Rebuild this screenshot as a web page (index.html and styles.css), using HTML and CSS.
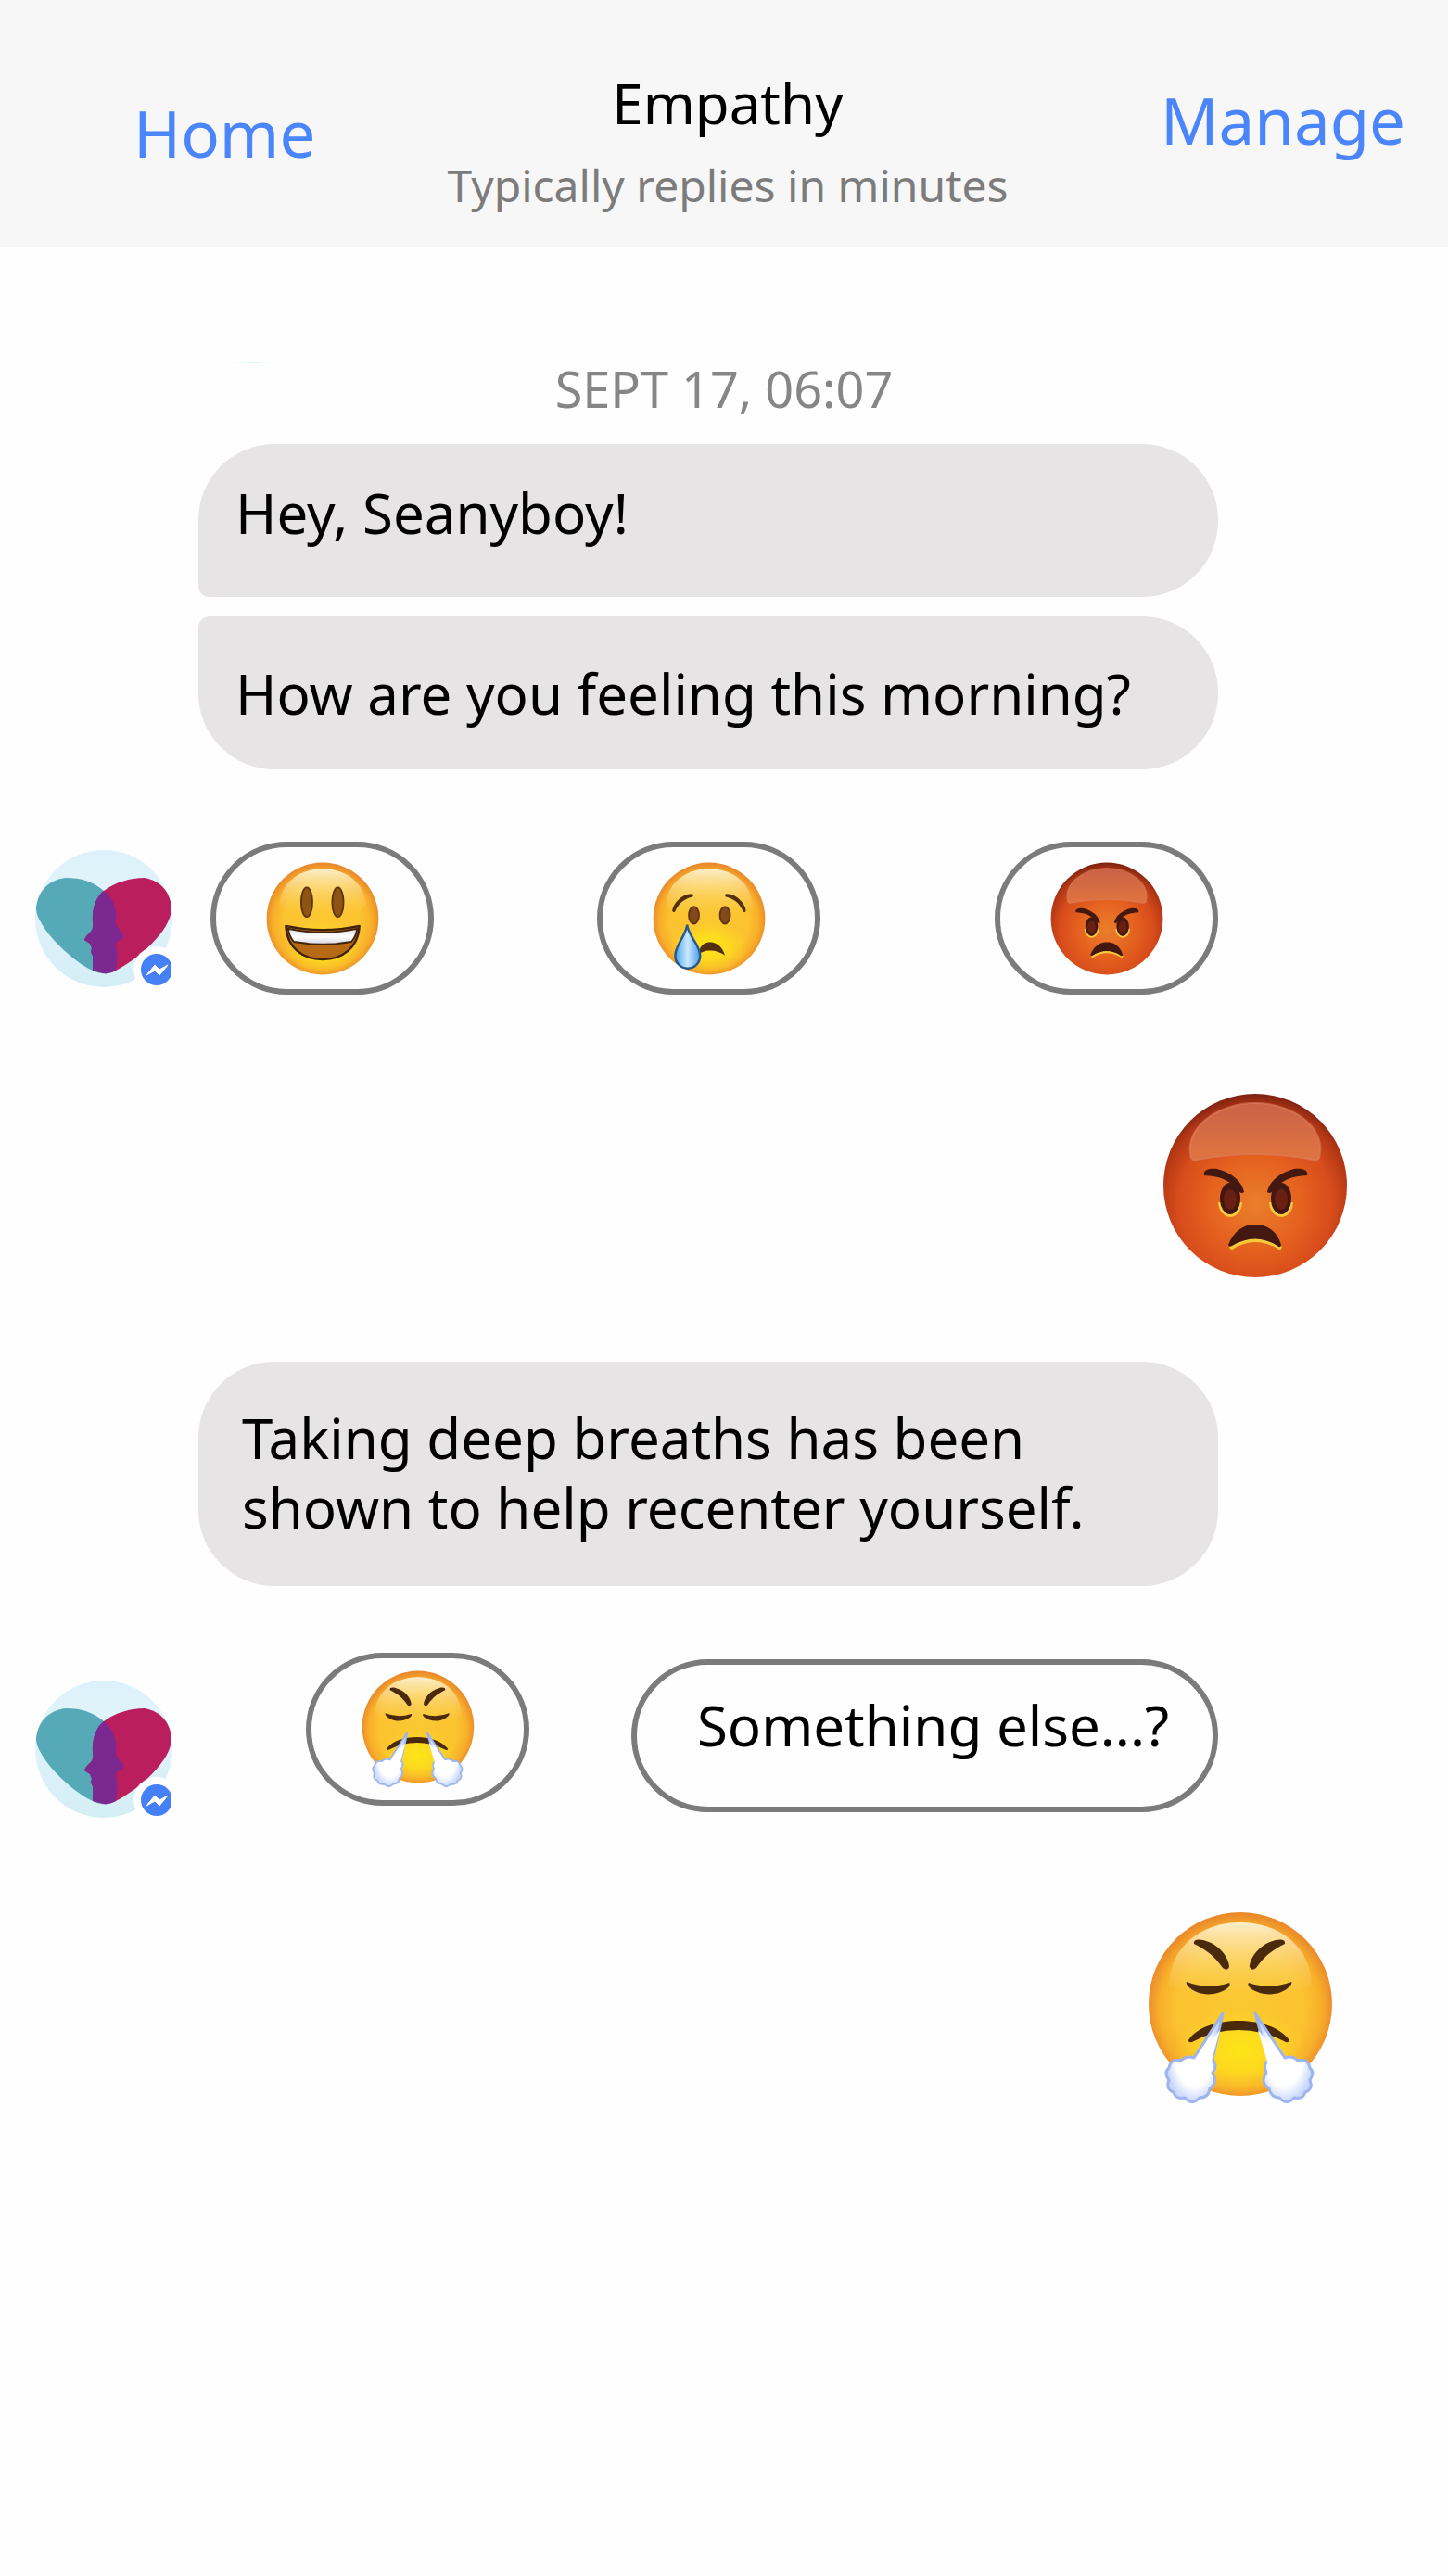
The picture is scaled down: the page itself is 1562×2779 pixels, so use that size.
FILE: index.html
```
<!DOCTYPE html>
<html lang="en">
<head>
<meta charset="utf-8">
<meta name="viewport" content="width=device-width, initial-scale=1">
<title>Empathy</title>
<link rel="stylesheet" href="styles.css">
</head>
<body>

<!-- Shared artwork -->
<svg class="sprite" aria-hidden="true">
  <defs>
    <radialGradient id="yellow" cx="50%" cy="52%" r="51%">
      <stop offset="0" stop-color="#fbc832"/>
      <stop offset="0.68" stop-color="#fbc32f"/>
      <stop offset="0.86" stop-color="#f8b02a"/>
      <stop offset="1" stop-color="#ea8a2a"/>
    </radialGradient>
    <radialGradient id="glow" cx="50%" cy="50%" r="50%">
      <stop offset="0" stop-color="#fde616" stop-opacity="0.95"/>
      <stop offset="0.5" stop-color="#fde218" stop-opacity="0.7"/>
      <stop offset="1" stop-color="#fdd520" stop-opacity="0"/>
    </radialGradient>
    <linearGradient id="sheen" x1="0" y1="0" x2="0" y2="1">
      <stop offset="0" stop-color="#fdf3d4" stop-opacity="0.95"/>
      <stop offset="1" stop-color="#fbd465" stop-opacity="0"/>
    </linearGradient>
    <radialGradient id="red" cx="50%" cy="60%" r="62%">
      <stop offset="0" stop-color="#ea7f2b"/>
      <stop offset="0.4" stop-color="#e5621f"/>
      <stop offset="0.68" stop-color="#d84c1b"/>
      <stop offset="0.86" stop-color="#b03615"/>
      <stop offset="1" stop-color="#6b1a0e"/>
    </radialGradient>
    <linearGradient id="redSheen" x1="0" y1="0" x2="0" y2="1">
      <stop offset="0" stop-color="#cb6247"/>
      <stop offset="1" stop-color="#e0743f"/>
    </linearGradient>
    <linearGradient id="teeth" x1="0" y1="0" x2="0" y2="1">
      <stop offset="0" stop-color="#dcdce2"/>
      <stop offset="0.5" stop-color="#ffffff"/>
      <stop offset="1" stop-color="#d6d6dc"/>
    </linearGradient>
    <linearGradient id="drop" x1="0" y1="0" x2="1" y2="0">
      <stop offset="0" stop-color="#4ba3ee"/>
      <stop offset="0.5" stop-color="#cbe8fd"/>
      <stop offset="1" stop-color="#4a9dec"/>
    </linearGradient>
    <radialGradient id="puff">
      <stop offset="0.65" stop-color="#ffffff"/>
      <stop offset="1" stop-color="#c9d8fb"/>
    </radialGradient>
    <linearGradient id="sky" x1="0" y1="0" x2="0" y2="1">
      <stop offset="0" stop-color="#dcf1fa"/>
      <stop offset="0.3" stop-color="#e2f4fb"/>
      <stop offset="1" stop-color="#d4eef6"/>
    </linearGradient>
    <radialGradient id="trace">
      <stop offset="0" stop-color="#c4ecf5"/>
      <stop offset="1" stop-color="#fefefe" stop-opacity="0"/>
    </radialGradient>
    <clipPath id="badgeClip"><rect width="147" height="148"/></clipPath>
  </defs>

  <symbol id="face" viewBox="0 0 200 200">
    <circle cx="100" cy="100" r="99" fill="url(#yellow)"/>
    <ellipse cx="100" cy="150" rx="70" ry="46" fill="url(#glow)"/>
    <path d="M23 80C24 38 58 12 100 12s76 26 77 68c-44 18-110 18-154 0z" fill="url(#sheen)"/>
  </symbol>

  <symbol id="grin" viewBox="0 0 200 200">
    <use href="#face" width="200" height="200"/>
    <g fill="#8f5314" stroke="#5d330d" stroke-width="3">
      <ellipse cx="72" cy="71" rx="10" ry="26"/>
      <ellipse cx="127" cy="71" rx="10" ry="26"/>
    </g>
    <path d="M35 113Q100 127 165 113C163 151 136 172 100 172S37 151 35 113z" fill="#b76a13" stroke="#40220d" stroke-width="4" stroke-linejoin="round"/>
    <path d="M39 118Q100 131 161 118Q159 132 151 141Q100 150 49 141Q41 132 39 118z" fill="url(#teeth)" stroke="#40220d" stroke-width="3"/>
  </symbol>

  <symbol id="cry" viewBox="0 0 200 200">
    <use href="#face" width="200" height="200"/>
    <g fill="#52300f">
      <path d="M36 88C31 84 46 56 69 56C74 57 72 61 69 62C53 66 46 75 40 87Q38 90 36 88z"/>
      <path d="M164 88C169 84 154 56 131 56C126 57 128 61 131 62C147 66 154 75 160 87Q162 90 164 88z"/>
      <path d="M82 160C84 147 91 142 101 142C115 142 124 152 128 165C116 156 98 153 84 161z"/>
    </g>
    <g fill="#83491a" stroke="#5f3515" stroke-width="3">
      <ellipse cx="73" cy="94" rx="9" ry="15"/>
      <ellipse cx="128" cy="94" rx="9" ry="15"/>
    </g>
    <path d="M61 111C63 131 84 146 84 166A22 22 0 0 1 40 166C40 146 59 131 61 111z" fill="url(#drop)" stroke="#24588f" stroke-width="4"/>
  </symbol>

  <symbol id="angry" viewBox="0 0 200 200">
    <circle cx="100" cy="100" r="99" fill="url(#red)"/>
    <path d="M31 70C22 36 62 11 100 11s78 25 69 59q-2 4-7 2Q100 60 38 72q-5 2-7-2z" fill="url(#redSheen)" stroke="#dc8060" stroke-opacity="0.6" stroke-width="2"/>
    <g fill="none" stroke="#f7c93c" stroke-width="4">
      <path d="M62 118C63 136 83 137 84 118"/>
      <path d="M117 118C118 136 138 137 139 118"/>
      <path d="M73 168Q100 150 128 168"/>
    </g>
    <g fill="#431810">
      <path d="M45 89C43 83 51 81 59 82C75 86 86 96 88 107Q84 110 81 104C69 92 60 90 45 89z"/>
      <path d="M156 89C158 83 150 81 142 82C126 86 115 96 113 107Q117 110 120 104C132 92 141 90 156 89z"/>
      <ellipse cx="73" cy="114" rx="11" ry="17"/>
      <ellipse cx="128" cy="114" rx="11" ry="17"/>
      <path d="M71 164C77 149 87 142 100 142s24 7 28 22q-1 4-4 1Q100 150 75 165q-3 2-4-1z"/>
    </g>
    <g fill="#692012">
      <ellipse cx="73" cy="115" rx="7" ry="11"/>
      <ellipse cx="128" cy="115" rx="7" ry="11"/>
    </g>
  </symbol>

  <symbol id="steam" viewBox="0 0 200 210">
    <use href="#face" width="200" height="200"/>
    <g fill="#4b2a0c">
      <path d="M50 35C49 30 55 30 60 31C77 35 88 50 88 60Q86 65 81 61C72 48 64 42 50 35z"/>
      <path d="M148 35C149 30 143 30 138 31C121 35 110 50 110 60Q112 65 117 61C126 48 134 42 148 35z"/>
      <path d="M42 76Q65 85 88 77Q90 79 86 83C74 92 53 92 43 80Q41 77 42 76z"/>
      <path d="M109 77Q132 85 155 76Q156 77 154 80C144 92 123 92 111 83Q107 79 109 77z"/>
      <path d="M44 139C54 124 76 118 98 118s44 6 55 21q-1 4-6 1Q124 128 98 128T50 140q-6 3-6-1z"/>
    </g>
    <g fill="url(#puff)" stroke="#9db4ee" stroke-width="3" stroke-linejoin="round">
      <path d="M81 110L70 160Q76 166 70 174Q76 185 67 191Q66 201 56 201Q48 210 40 201Q30 203 28 195Q19 192 23 182Q17 174 23 169Q25 158 36 161Q42 155 50 158z"/>
      <path d="M116 110L130 160Q124 166 128 174Q121 185 131 191Q133 201 142 201Q150 210 158 201Q168 203 170 195Q179 192 175 182Q181 174 175 169Q173 158 162 161Q156 155 148 158z"/>
    </g>
    <g fill="#ffffff">
      <path d="M78 128L65 176L44 172L54 158z"/>
      <path d="M119 128L133 176L154 172L144 158z"/>
    </g>
  </symbol>

  <symbol id="logo" viewBox="0 0 148 148">
    <circle cx="74" cy="74" r="74" fill="url(#sky)"/>
    <path d="M74 44C62 34 50 30 33 30C14 32 2 45 1 64C2 82 36 118 62 130Q69 134 75 133L87 128V101Q87 97 95 96V90Q87 84 87 74C89 62 82 50 74 44z" fill="#56aab8"/>
    <path d="M74 44C86 35 102 30 118 30C136 33 147 47 147 64C146 86 114 116 87 130Q80 134 74 133L62 130V114L60 110L61 106L59 101L53 97Q54 93 60 88Q63 85 62 78C61 62 66 50 74 44z" fill="#bb1e5c"/>
    <path d="M74 44C82 50 89 62 87 76Q87 84 95 90V96Q87 97 87 102Q90 112 87 130Q80 134 74 133L62 130V114L60 110L61 106L59 101L53 97Q54 93 60 88Q63 85 62 78C61 62 66 50 74 44z" fill="#7b2890"/>
    <circle cx="131" cy="129" r="25" fill="#fefefe"/>
    <g clip-path="url(#badgeClip)">
      <circle cx="131" cy="129" r="17" fill="#4680f6"/>
      <path d="M120 135L129 124L134 129L143 124L134 135L129 130z" fill="#ffffff" stroke="#ffffff" stroke-linejoin="round"/>
    </g>
  </symbol>
</svg>

<header class="bar">
  <a class="bar-link home" href="#home">Home</a>
  <div class="heading">
    <h1 class="name">Empathy</h1>
    <p class="status">Typically replies in minutes</p>
  </div>
  <a class="bar-link manage" href="#manage">Manage</a>
</header>

<main class="chat">
  <p class="date">
    <svg class="trace" viewBox="0 0 100 24" aria-hidden="true"><ellipse cx="28" cy="22" rx="26" ry="2" fill="url(#trace)"/></svg>
    SEPT 17, 06:07
  </p>

  <p class="bubble first">Hey, Seanyboy!</p>
  <p class="bubble last">How are you feeling this morning?</p>

  <div class="row moods">
    <svg class="avatar" role="img" aria-label="Empathy"><use href="#logo"/></svg>
    <div class="choices three">
      <button class="pill" type="button" aria-label="Happy"><svg class="emoji"><use href="#grin"/></svg></button>
      <button class="pill" type="button" aria-label="Sad"><svg class="emoji"><use href="#cry"/></svg></button>
      <button class="pill" type="button" aria-label="Angry"><svg class="emoji"><use href="#angry"/></svg></button>
    </div>
  </div>

  <div class="reply anger"><svg class="big" role="img" aria-label="Angry face"><use href="#angry"/></svg></div>

  <p class="bubble advice">Taking deep breaths has been<br>shown to help recenter yourself.</p>

  <div class="row actions">
    <svg class="avatar low" role="img" aria-label="Empathy"><use href="#logo"/></svg>
    <div class="choices two">
      <button class="pill" type="button" aria-label="Breathe out"><svg class="emoji tall"><use href="#steam"/></svg></button>
      <button class="pill wide" type="button">Something else...?</button>
    </div>
  </div>

  <div class="reply breath"><svg class="big tall" role="img" aria-label="Face with steam from nose"><use href="#steam"/></svg></div>
</main>

</body>
</html>
```
FILE: styles.css
```
* {
  box-sizing: border-box;
}

body {
  margin: 0;
  min-height: 100vh;
  background: #fefefe;
  color: #000;
  font-family: "Noto Sans", sans-serif;
  font-size: 60px;
  line-height: 75px;
}

h1,
p {
  margin: 0;
  font-size: inherit;
  font-weight: 400;
}

.sprite {
  position: absolute;
  width: 0;
  height: 0;
}

/* Top bar */
.bar {
  display: grid;
  grid-template-columns: 1fr auto 1fr;
  align-items: start;
  padding: 74px 46px 36px 54px;
  border-bottom: 1px solid #e6e6e6;
  background: #f7f7f7;
}

.bar-link {
  color: #4b85fb;
  font-size: 69px;
  line-height: 82px;
  text-decoration: none;
}

.home {
  padding: 28px 0 0 90px;
}

.manage {
  padding-top: 14px;
  justify-self: end;
}

.heading {
  text-align: center;
}

.status {
  margin-top: 21px;
  color: #7c7c7c;
  font-size: 48px;
  line-height: 60px;
}

/* Conversation */
.chat {
  padding: 122px 0 80px;
}

.date {
  position: relative;
  margin-bottom: 30px;
  color: #868686;
  font-size: 54px;
  line-height: 60px;
  text-align: center;
}

.trace {
  position: absolute;
  top: -20px;
  left: 244px;
  width: 100px;
  height: 24px;
}

.bubble {
  margin: 0 248px 0 214px;
  padding: 46px 40px 44px;
  border-radius: 82px;
  background: #e6e4e5;
}

.first {
  padding-top: 37px;
  padding-bottom: 53px;
  border-bottom-left-radius: 12px;
}

.last {
  margin-top: 21px;
  border-top-left-radius: 12px;
}

.advice {
  padding: 45px 47px 47px;
}

.row {
  display: flex;
  align-items: flex-start;
  padding: 0 248px 0 38px;
}

.moods {
  align-items: center;
  margin-top: 78px;
}

.actions {
  margin-top: 72px;
}

.avatar {
  flex: none;
  width: 148px;
  height: 148px;
}

.low {
  margin-top: 30px;
}

.choices {
  flex: 1;
  margin-left: 41px;
}

.three {
  display: grid;
  grid-template-columns: 417fr 429fr 241px;
}

.two {
  display: flex;
  justify-content: flex-end;
  gap: 110px;
}

.pill {
  display: flex;
  align-items: center;
  justify-content: center;
  width: 241px;
  height: 165px;
  padding: 0;
  border: 6px solid #7b7b7b;
  border-radius: 83px;
  background: #fefefe;
  color: #000;
  font: inherit;
}

.wide {
  align-items: flex-start;
  width: 633px;
  margin-top: 7px;
  padding: 28px 0 0 18px;
}

.emoji {
  width: 122px;
  height: 122px;
}

.emoji.tall {
  height: 128px;
}

.reply {
  display: flex;
  justify-content: flex-end;
}

.big {
  width: 200px;
  height: 200px;
}

.big.tall {
  height: 210px;
}

.anger {
  margin: 106px 108px 90px 0;
}

.breath {
  margin: 101px 124px 0 0;
}
```
